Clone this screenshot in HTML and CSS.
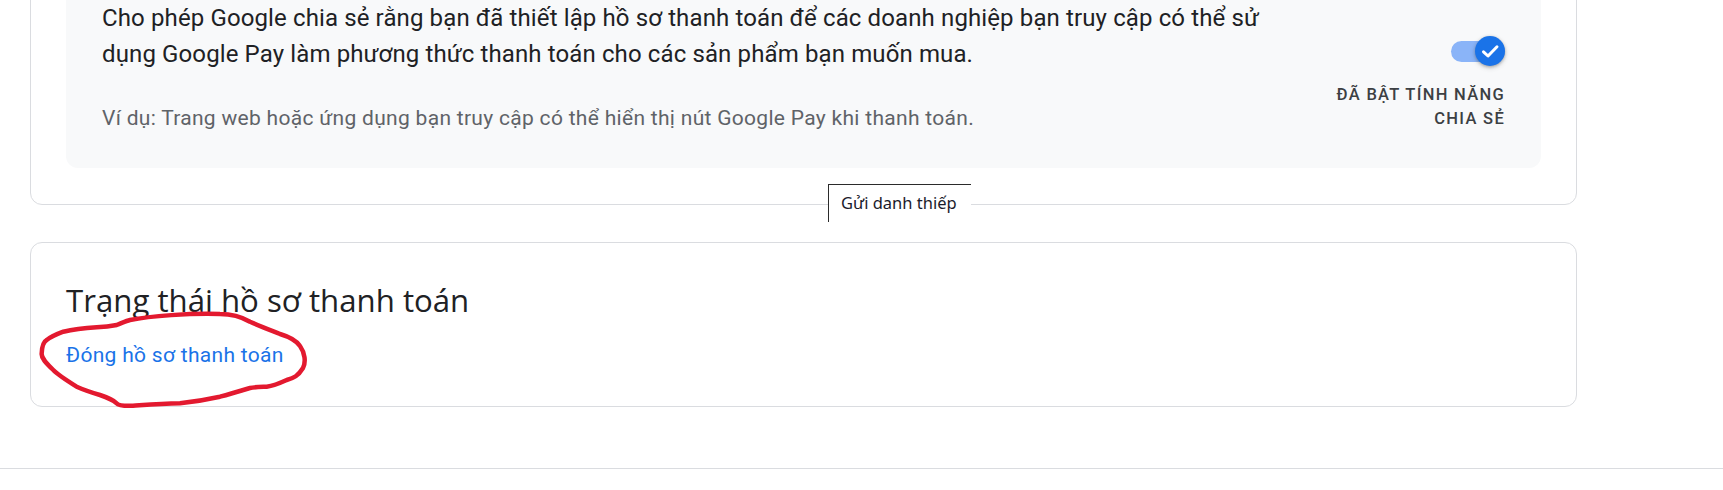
FILE: index.html
```html
<!DOCTYPE html>
<html lang="vi">
<head>
    <meta charset="UTF-8">
    <meta name="viewport" content="width=device-width, initial-scale=1.0">
    <link rel="stylesheet" href="styles.css">
</head>
<body>
    <main class="page">
        <section class="card card-share">
            <div class="share-panel">
                <div class="share-text">
                    <p class="share-desc">Cho phép Google chia sẻ rằng bạn đã thiết lập hồ sơ thanh toán để các doanh nghiệp bạn truy cập có thể sử dụng Google Pay làm phương thức thanh toán cho các sản phẩm bạn muốn mua.</p>
                    <p class="share-example">Ví dụ: Trang web hoặc ứng dụng bạn truy cập có thể hiển thị nút Google Pay khi thanh toán.</p>
                </div>
                <div class="share-status">
                    <span class="switch">
                        <span class="switch-track"></span>
                        <span class="switch-thumb">
                            <svg viewBox="0 0 30 30" width="30" height="30">
                                <path d="M8.5 15.8 L13 20 L22 10.8" fill="none" stroke="#fff" stroke-width="3" stroke-linecap="round" stroke-linejoin="round"/>
                            </svg>
                        </span>
                    </span>
                    <div class="status-label">ĐÃ BẬT TÍNH NĂNG<br>CHIA SẺ</div>
                </div>
            </div>
        </section>

        <section class="card card-status">
            <h2 class="card-title">Trạng thái hồ sơ thanh toán</h2>
            <a class="text-link" href="#">Đóng hồ sơ thanh toán</a>
        </section>
    </main>

    <footer class="footer"></footer>

    <!-- tooltip left by the mouse pointer -->
    <div class="tooltip">Gửi danh thiếp</div>

    <!-- hand-drawn red circle on top of the screenshot -->
    <svg class="scribble" viewBox="0 0 1723 490" width="1723" height="490">
        <path d="M130 320
                 C150 316, 190 313, 220 314
                 C232 314, 240 316, 250 321.7
                 C262 327, 270 330, 280 334
                 C290 337, 296 340, 300 346
                 C305 353, 306 362, 303 368
                 C298 376, 294 378, 286.7 380
                 C278 384, 272 386, 266.7 386.7
                 C258 387, 254 387, 250 388
                 C240 391, 230 394, 220 396.7
                 C205 400, 192 402, 180 403.3
                 C160 404, 145 405, 133 405.7
                 C124 406, 118 405, 116.7 403.3
                 C112 399, 106 397, 100 395
                 C90 392, 84 390, 76.7 386.7
                 C66 380, 58 375, 53.3 370
                 C46 363, 41 358, 41.7 353.3
                 C42 346, 43 342, 46.7 340
                 C52 336, 57 334, 63.3 331.7
                 C75 329, 86 328, 96.7 327.3
                 C106 327, 112 326, 116.7 325
                 C122 323, 126 321, 130 320 Z"
              fill="none" stroke="#e3192f" stroke-width="4.5" stroke-linejoin="round"/>
    </svg>
</body>
</html>
```

FILE: styles.css
```css
* {
    margin: 0;
    padding: 0;
    box-sizing: border-box;
}

body {
    position: relative;
    height: 490px;
    overflow: hidden;
    background: #fff;
    font-family: Roboto, "Noto Sans", Arial, sans-serif;
    color: #202124;
}

.page {
    width: 1577px;
    padding-left: 30px;
}

.card {
    background: #fff;
    border: 1px solid #dadce0;
    border-radius: 12px;
    padding: 36px 35px;
}

/* page is scrolled: the top of this card is above the window */
.card-share {
    margin-top: -73px;
}

.card-status {
    margin-top: 37px;
}

.share-panel {
    display: flex;
    background: #f8f9fa;
    border-radius: 12px;
    padding: 36px 36px 35px 36px;
}

.share-text {
    width: 1200px;
    flex: none;
}

.share-desc {
    font-size: 24px;
    line-height: 36px;
    letter-spacing: 0.12px;
    color: #202124;
}

.share-example {
    margin-top: 31px;
    font-size: 21px;
    line-height: 30px;
    letter-spacing: 0.3px;
    color: #5f6368;
}

.share-status {
    margin-left: auto;
    display: flex;
    flex-direction: column;
    align-items: flex-end;
    padding-top: 36px;
}

.switch {
    position: relative;
    display: block;
    width: 54px;
    height: 30px;
}

.switch-track {
    position: absolute;
    left: 0;
    top: 4.5px;
    width: 54px;
    height: 21px;
    border-radius: 11px;
    background: #8ab4f8;
}

.switch-thumb {
    position: absolute;
    right: 0;
    top: 0;
    width: 30px;
    height: 30px;
    border-radius: 50%;
    background: #1a73e8;
    box-shadow: 0 1px 3px rgba(60, 64, 67, 0.35), 0 2px 5px rgba(60, 64, 67, 0.2);
}

.switch-thumb svg {
    display: block;
}

.status-label {
    margin-top: 17px;
    font-size: 16.5px;
    line-height: 24px;
    font-weight: 500;
    letter-spacing: 1.3px;
    text-align: right;
    color: #3c4043;
    white-space: nowrap;
}

.card-title {
    font-family: "Open Sans", Roboto, sans-serif;
    font-size: 31.2px;
    line-height: 42px;
    font-weight: 400;
    color: #202124;
}

.text-link {
    display: inline-block;
    margin-top: 19px;
    font-size: 21px;
    line-height: 30px;
    letter-spacing: 0.3px;
    color: #1a73e8;
    text-decoration: none;
}

.footer {
    margin-top: 61px;
    border-top: 1px solid #dadce0;
}

.tooltip {
    position: absolute;
    left: 828px;
    top: 184px;
    width: 143px;
    height: 38px;
    padding: 6px 0 0 12px;
    background: #fff;
    border-top: 1px solid #2b2b2b;
    border-left: 1px solid #2b2b2b;
    font-family: "Noto Sans", "Open Sans", sans-serif;
    font-size: 16.5px;
    line-height: 24px;
    color: #1b1b2b;
}

.scribble {
    position: absolute;
    left: 0;
    top: 0;
    pointer-events: none;
}
```
